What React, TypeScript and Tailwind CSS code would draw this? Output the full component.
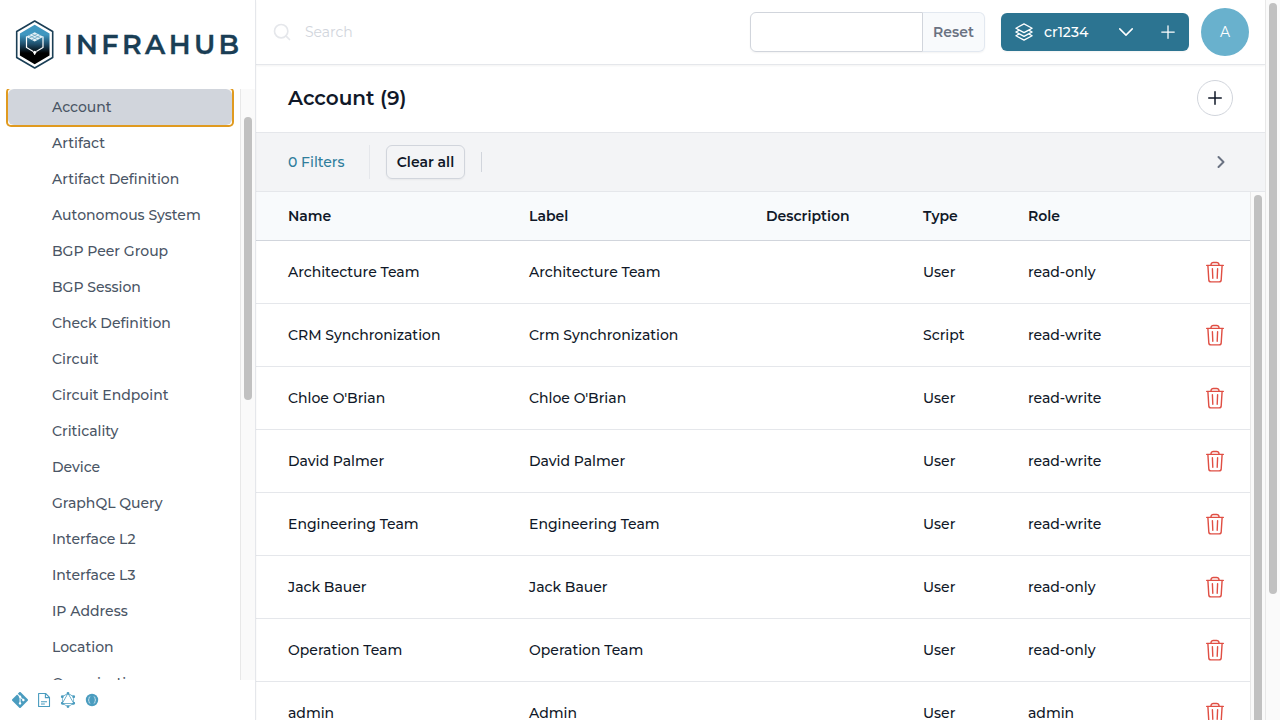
import { HiOutlineSquare3Stack3D, HiOutlineChevronDown, HiOutlinePlus } from "react-icons/hi2";
import { SiGraphql, SiGit } from "react-icons/si";
import { Search, ChevronRight } from "lucide-react";

const menu = [
  "Account",
  "Artifact",
  "Artifact Definition",
  "Autonomous System",
  "BGP Peer Group",
  "BGP Session",
  "Check Definition",
  "Circuit",
  "Circuit Endpoint",
  "Criticality",
  "Device",
  "GraphQL Query",
  "Interface L2",
  "Interface L3",
  "IP Address",
  "Location",
  "Organization",
];

const rows = [
  ["Architecture Team", "Architecture Team", "User", "read-only"],
  ["CRM Synchronization", "Crm Synchronization", "Script", "read-write"],
  ["Chloe O'Brian", "Chloe O'Brian", "User", "read-write"],
  ["David Palmer", "David Palmer", "User", "read-write"],
  ["Engineering Team", "Engineering Team", "User", "read-write"],
  ["Jack Bauer", "Jack Bauer", "User", "read-only"],
  ["Operation Team", "Operation Team", "User", "read-only"],
  ["admin", "Admin", "User", "admin"],
];

function Logo() {
  return (
    <svg viewBox="0 0 40 50" className="h-[50px] w-10 shrink-0">
      <defs>
        <linearGradient id="hex" x1="0" y1="0" x2="0" y2="1">
          <stop offset="0.25" stopColor="#3f97c0" />
          <stop offset="0.5" stopColor="#1d4a66" />
          <stop offset="0.72" stopColor="#000" />
        </linearGradient>
      </defs>
      <path d="M19.7 1 37.7 11.500v26L19.700 48 1.700 37.500v-26Z" fill="#fff" stroke="#1a3e55" strokeWidth="1.600" strokeLinejoin="round" />
      <path d="M19.700 4.800 34.500 13.500v22l-14.800 8.700L4.900 35.500v-22Z" fill="url(#hex)" />
      <path d="M11.500 16.500v11l6.700 4M28 16.500v11l-6.700 4" fill="none" stroke="#fff" strokeWidth="1.200" />
      <path d="M19.700 12.300 28.400 16.800l-8.700 4.700L11 16.800Z" fill="#e4f1f7" />
      <path d="m16.800 13.800 8.700 4.500m-2.900-4.500-8.700 4.500m0-3 8.700 4.500m2.900-4.500-8.700 4.500" stroke="#4a94b5" strokeWidth=".6" />
      <circle cx="19.700" cy="32.300" r="1.600" fill="#fff" />
      <path d="M19.700 32v3" stroke="#fff" strokeWidth="1" />
    </svg>
  );
}

function Trash() {
  return (
    <svg viewBox="0 0 20 24" className="h-6 w-5" fill="none" stroke="#e04f44" strokeWidth="1.400" strokeLinecap="round" strokeLinejoin="round">
      <path d="M1.700 5.400h16.600" />
      <path d="M6 5.200V4.600Q6.300 2.500 8.400 2.500h3.200Q13.700 2.500 14 4.600V5.200" />
      <path d="m2.900 5.600.9 14.300Q3.900 21.900 5.900 21.900h8.200q2 0 2.100-2L17.100 5.600" />
      <path d="m7.400 8.800.4 9.400M12.600 8.800l-.4 9.400" />
    </svg>
  );
}

function DocumentIcon() {
  return (
    <svg viewBox="0 0 16 16" className="size-4" fill="none" stroke="currentColor" strokeWidth="1.100">
      <path d="M2.600 1.500h7l3.900 3.900v9.100H2.600Z" strokeLinejoin="round" />
      <path d="M9.400 1.700v3.900h3.900" />
      <path d="M5 9.800h6M5 12h3.800" />
    </svg>
  );
}

function BracesIcon() {
  return (
    <svg viewBox="0 0 16 16" className="size-4">
      <circle cx="8" cy="8" r="6.200" fill="currentColor" />
      <path d="M6.300 4.700q-1.300 0-1.300 1.300v1q0 1-.9 1 .9 0 .9 1v1q0 1.300 1.300 1.300M9.700 4.700q1.300 0 1.300 1.300v1q0 1 .9 1-.9 0-.9 1v1q0 1.300-1.300 1.300" fill="none" stroke="#fff" strokeOpacity=".75" strokeWidth=".8" />
    </svg>
  );
}

function Scrollbar({ thumb }: { thumb: string }) {
  return (
    <div className="w-[15px] shrink-0 border-l border-[#e8e8e8] bg-[#fafafa] pl-[3px]">
      <div className={`w-2 rounded-full bg-[#c1c1c1] ${thumb}`} />
    </div>
  );
}

export default function App() {
  return (
    <div className="flex h-[720px] w-[1280px] overflow-hidden bg-white font-['Montserrat','Inter',sans-serif] text-sm font-medium text-gray-900 antialiased">
      <aside className="z-10 flex w-64 shrink-0 flex-col border-r border-gray-200 shadow-xs">
        <div className="flex h-[89px] shrink-0 items-center pl-[15px]">
          <Logo />
          <div className="mt-px ml-[9px] text-[27px] font-semibold tracking-[3.400px] text-[#1a3e55] [-webkit-text-stroke:0.3px_#1a3e55]">INFRAHUB</div>
        </div>
        <div className="flex h-[591px] overflow-hidden">
          <nav className="w-60 shrink-0 px-2 text-gray-600">
            {menu.map((name, i) => (
              <div key={name} className={i === 0 ? "rounded-[3px] bg-white shadow-[0_0_0_2px_#e09a1f]" : ""}>
                <div className={`flex h-9 items-center pl-11 ${i === 0 ? "rounded-md bg-gray-300" : ""}`}>{name}</div>
              </div>
            ))}
          </nav>
          <Scrollbar thumb="mt-7 h-[283px]" />
        </div>
        <div className="flex h-10 items-center gap-2 pl-3 text-[#4a9cbf]">
          <SiGit size={16} />
          <DocumentIcon />
          <SiGraphql size={16} />
          <BracesIcon />
        </div>
      </aside>
      <div className="flex min-w-0 flex-1 flex-col">
        <header className="flex h-[65px] shrink-0 items-center border-b border-gray-200 pr-4 pl-4 shadow-xs">
          <Search size={20} strokeWidth={2} className="text-gray-200" />
          <span className="ml-[13px] flex-1 font-normal text-gray-300">Search</span>
          <div className="flex h-10 w-[235px] rounded-md shadow-xs">
            <div className="w-[173px] rounded-l-md border border-gray-300" />
            <div className="flex flex-1 items-center justify-center rounded-r-md border border-l-0 border-slate-200 bg-slate-50 font-semibold text-gray-500">Reset</div>
          </div>
          <div className="ml-4 flex h-[38px] w-[188px] items-center rounded-md bg-[#2c7491] pl-[13px] text-white shadow-xs">
            <HiOutlineSquare3Stack3D size={20} />
            <span className="ml-[10px] w-[72px]">cr1234</span>
            <HiOutlineChevronDown size={20} strokeWidth={1.8} />
            <HiOutlinePlus size={20} className="ml-[22px]" />
          </div>
          <div className="ml-3 flex size-12 items-center justify-center rounded-full bg-[#69b1cd] font-normal text-white">A</div>
        </header>
        <div className="flex h-[67px] shrink-0 items-center justify-between pr-8 pb-[2px] pl-8">
          <h1 className="text-xl font-semibold">Account (9)</h1>
          <div className="flex size-9 items-center justify-center rounded-full border border-gray-300">
            <HiOutlinePlus size={20} strokeWidth={1.8} />
          </div>
        </div>
        <div className="flex h-[60px] shrink-0 items-center border-y border-gray-200 bg-gray-100 pl-8">
          <span className="w-[81px] text-[#2f7d9c]">0 Filters</span>
          <div className="h-[34px] w-px bg-gray-200" />
          <div className="ml-4 flex h-[34px] w-[79px] items-center justify-center rounded-md border border-gray-300 font-semibold shadow-xs">Clear all</div>
          <div className="ml-4 h-5 w-px bg-gray-300" />
          <ChevronRight size={20} strokeWidth={2.4} className="mr-[34px] ml-auto text-gray-500" />
        </div>
        <div className="flex min-h-0 flex-1">
          <div className="min-w-0 flex-1">
            <div className="grid h-[49px] grid-cols-[241px_237px_157px_105px_1fr] items-center border-b border-gray-300 bg-slate-50 pl-8 font-semibold">
              <span>Name</span>
              <span>Label</span>
              <span>Description</span>
              <span>Type</span>
              <span>Role</span>
            </div>
            {rows.map(([name, label, type, role]) => (
              <div key={name} className="grid h-[63px] grid-cols-[241px_394px_105px_1fr_45px] items-center border-b border-gray-200 pl-8">
                <span>{name}</span>
                <span>{label}</span>
                <span>{type}</span>
                <span>{role}</span>
                <Trash />
              </div>
            ))}
          </div>
          <Scrollbar thumb="mt-[3px] h-[600px]" />
        </div>
      </div>
      <Scrollbar thumb="mt-[3px] h-[591px]" />
    </div>
  );
}
